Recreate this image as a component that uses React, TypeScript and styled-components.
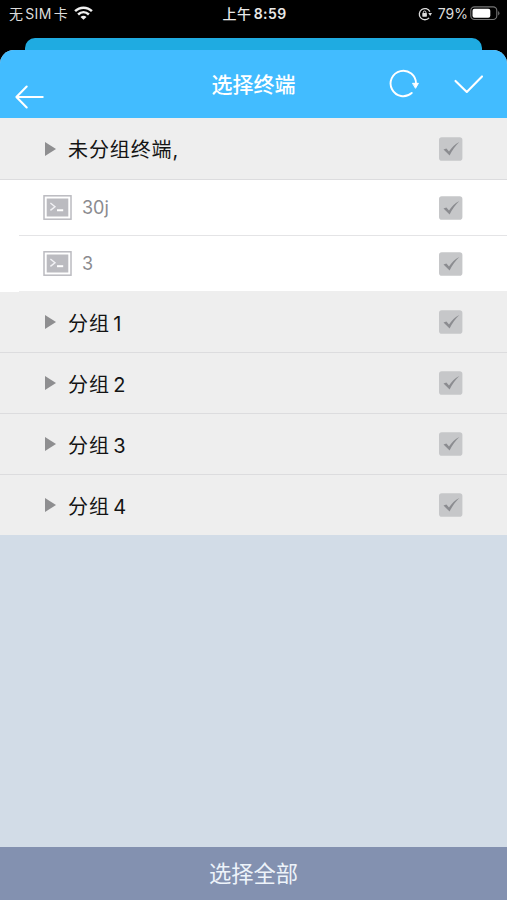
import React from "react";
import styled, { createGlobalStyle } from "styled-components";

const GlobalStyle = createGlobalStyle`
  * { box-sizing: border-box; }
  body {
    margin: 0;
    background: #000;
    font-family: Inter, "Noto Sans CJK SC", sans-serif;
  }
`;

const Screen = styled.div`
  display: flex;
  flex-direction: column;
  width: 507px;
  height: 900px;
  overflow: hidden;
  background: #000;
`;

const StatusBar = styled.div`
  display: grid;
  grid-template-columns: 1fr auto 1fr;
  flex: 0 0 38px;
  height: 38px;
  padding: 3px 7px 0 9px;
  color: #dcdcdc;
  font-size: 14px;
  line-height: 21px;
  white-space: nowrap;
`;

const StatusGroup = styled.div<{ $end?: boolean }>`
  display: flex;
  align-items: center;
  height: 21px;
  justify-content: ${(p) => (p.$end ? "flex-end" : "flex-start")};
  gap: ${(p) => (p.$end ? "3px" : "6px")};
`;

const Carrier = styled.span`
  letter-spacing: 0.3px;
  word-spacing: -2.2px;
`;

const Clock = styled.div`
  font-weight: 600;
  font-size: 14px;
  letter-spacing: 0.4px;
  word-spacing: -1.5px;
  color: #e9e9e9;
`;

const ClockPrefix = styled.span`
  font-weight: 500;
`;

const Percent = styled.span`
  margin-left: 3px;
  margin-right: -1px;
`;

const SheetBehind = styled.div`
  flex: 0 0 12px;
  margin: 0 25px;
  border-radius: 10px 10px 0 0;
  background: #1fabe1;
`;

const Sheet = styled.main`
  display: flex;
  flex: 1;
  flex-direction: column;
  border-radius: 14px 14px 0 0;
  overflow: hidden;
  background: #d2dce7;
`;

const Header = styled.header`
  display: grid;
  grid-template-columns: 1fr auto 1fr;
  flex: 0 0 68px;
  height: 68px;
  background: #42bcff;
  color: #fff;
`;

const HeaderSide = styled.div<{ $end?: boolean }>`
  display: flex;
  align-items: flex-start;
  justify-content: ${(p) => (p.$end ? "flex-end" : "flex-start")};
  gap: 35px;
  padding: ${(p) => (p.$end ? "18px 23px 0 0" : "34px 0 0 13px")};
`;

const Title = styled.h1`
  margin: 0;
  font-size: 21px;
  font-weight: 500;
  line-height: 69px;
`;

const IconButton = styled.button`
  display: flex;
  padding: 0;
  border: 0;
  background: none;
  color: inherit;
`;

const List = styled.div`
  display: flex;
  flex-direction: column;
`;

const Row = styled.div`
  display: flex;
  align-items: center;
  padding-right: 44px;
`;

const GroupRow = styled(Row)<{ $height: number; $divider: boolean }>`
  height: ${(p) => p.$height}px;
  padding-left: 45px;
  background: #eee;
  color: #141414;
  font-size: 20px;
  letter-spacing: 0.9px;
  word-spacing: -3px;
  border-bottom: ${(p) => (p.$divider ? "1px solid #dcdcde" : "0")};
`;

const ItemBlock = styled.div`
  background: #fff;
  padding-left: 19px;
`;

const ItemRow = styled(Row)<{ $last?: boolean }>`
  height: 56px;
  padding-left: 24px;
  border-bottom: 1px solid ${(p) => (p.$last ? "#eee" : "#e4e4e6")};
  color: #8b8b8f;
  font-size: 18px;
`;

const Label = styled.span<{ $gap: number }>`
  flex: 1;
  margin-left: ${(p) => p.$gap}px;
`;

const Triangle = styled.span`
  width: 0;
  height: 0;
  border-top: 7.5px solid transparent;
  border-bottom: 7.5px solid transparent;
  border-left: 11px solid #8e8e90;
`;

const Footer = styled.button`
  flex: 0 0 53px;
  margin-top: auto;
  padding: 0;
  border: 0;
  background: #8391b0;
  color: #edf3fa;
  font-family: inherit;
  font-size: 22.3px;
  line-height: 53px;
`;

const WifiIcon = () => (
  <svg width="19" height="15" viewBox="0 0 19 15" fill="none" stroke="#f0f0f0" strokeWidth="2.5">
    <path d="M1.1 5.2C5.8 .5 13.2 .5 17.9 5.2M4.1 8.5C7.3 5.5 11.7 5.5 14.9 8.5" />
    <path d="M6.5 10.9C8.3 9.4 10.7 9.4 12.5 10.9L9.5 13.7Z" fill="#f0f0f0" stroke="none" />
  </svg>
);

const RotationLockIcon = () => (
  <svg width="14" height="14" viewBox="0 0 14 14" fill="none" stroke="#dcdcdc">
    <path d="M11.9 4.6A5.6 5.6 0 1 0 11.1 10.9" strokeWidth="1.3" />
    <path d="M10.3 6h3.7l-1.8 2.9Z" fill="#dcdcdc" stroke="none" />
    <path d="M5.3 6.5V5.3a1.3 1.3 0 0 1 2.6 0v1.2" />
    <rect x="4.3" y="6.1" width="4.6" height="3.6" rx=".6" fill="#dcdcdc" stroke="none" />
  </svg>
);

const BatteryIcon = () => (
  <svg width="30" height="15" viewBox="0 0 30 15">
    <rect x=".8" y=".9" width="26" height="12.6" rx="3.7" fill="none" stroke="#777" strokeWidth="1.1" />
    <rect x="2.5" y="2.7" width="17.8" height="9" rx="2" fill="#fff" />
    <path d="M28.2 5a2.7 2.7 0 0 1 0 4.5Z" fill="#777" />
  </svg>
);

const BackIcon = () => (
  <svg width="31" height="26" viewBox="0 0 31 26" fill="none" stroke="currentColor" strokeWidth="2.1" strokeLinecap="round" strokeLinejoin="round">
    <path d="M13.7 2.5L3.4 13L13.7 23.5M3.4 13H29.7" />
  </svg>
);

const RefreshIcon = () => (
  <svg width="30" height="32" viewBox="0 0 30 32" fill="none" stroke="currentColor" strokeWidth="1.9" strokeLinecap="round">
    <path d="M27 15.7A12.7 12.7 0 1 0 22.7 25" />
    <path d="M23.9 15.3H29.4L26.7 20Z" fill="currentColor" strokeWidth="1" strokeLinejoin="round" />
  </svg>
);

const ConfirmIcon = () => (
  <svg width="30" height="32" viewBox="0 0 30 32" fill="none" stroke="currentColor" strokeWidth="2.1" strokeLinecap="round" strokeLinejoin="round">
    <path d="M1.5 12.9L12.8 24L28 8.4" />
  </svg>
);

const TerminalIcon = () => (
  <svg width="29" height="25" viewBox="0 0 29 25">
    <rect x="1" y=".8" width="27" height="23.4" fill="#fff" stroke="#bbbbc0" strokeWidth="1.5" />
    <rect x="3.7" y="3.5" width="21.6" height="18" fill="#bbbbc0" />
    <path d="M7.4 8L12 11.7L7.4 15.4" fill="none" stroke="#f2f2f5" strokeWidth="1.4" />
    <path d="M14 15.2H20.2" stroke="#fff" strokeWidth="2" />
  </svg>
);

const CheckIcon = () => (
  <svg width="24" height="24" viewBox="0 0 24 24">
    <rect x="0" y=".3" width="23.4" height="23.4" rx="2.8" fill="#c6c7c9" />
    <path d="M4.5 12.6L7.4 11.4L10 14.5C12.5 10.5 16.2 7.2 20.3 5C16.4 8.9 13.1 13.2 10.6 18.6Z" fill="#8b8c90" />
  </svg>
);

type GroupProps = { name: string; height?: number; divider?: boolean };

const Group = ({ name, height = 61, divider = true }: GroupProps) => (
  <GroupRow $height={height} $divider={divider}>
    <Triangle />
    <Label $gap={12}>{name}</Label>
    <CheckIcon />
  </GroupRow>
);

const terminals = ["30j", "3"];
const groups = ["分组 1", "分组 2", "分组 3"];

export default function App() {
  return (
    <>
      <GlobalStyle />
      <Screen>
        <StatusBar>
          <StatusGroup>
            <Carrier>无 SIM 卡</Carrier>
            <WifiIcon />
          </StatusGroup>
          <Clock>
            <ClockPrefix>上午</ClockPrefix> 8:59
          </Clock>
          <StatusGroup $end>
            <RotationLockIcon />
            <Percent>79%</Percent>
            <BatteryIcon />
          </StatusGroup>
        </StatusBar>
        <SheetBehind />
        <Sheet>
          <Header>
            <HeaderSide>
              <IconButton aria-label="返回"><BackIcon /></IconButton>
            </HeaderSide>
            <Title>选择终端</Title>
            <HeaderSide $end>
              <IconButton aria-label="刷新"><RefreshIcon /></IconButton>
              <IconButton aria-label="确定"><ConfirmIcon /></IconButton>
            </HeaderSide>
          </Header>
          <List>
            <Group name="未分组终端," height={62} />
            <ItemBlock>
              {terminals.map((name, i) => (
                <ItemRow key={name} $last={i === terminals.length - 1}>
                  <TerminalIcon />
                  <Label $gap={10}>{name}</Label>
                  <CheckIcon />
                </ItemRow>
              ))}
            </ItemBlock>
            {groups.map((name) => (
              <Group key={name} name={name} />
            ))}
            <Group name="分组 4" height={60} divider={false} />
          </List>
          <Footer>选择全部</Footer>
        </Sheet>
      </Screen>
    </>
  );
}
